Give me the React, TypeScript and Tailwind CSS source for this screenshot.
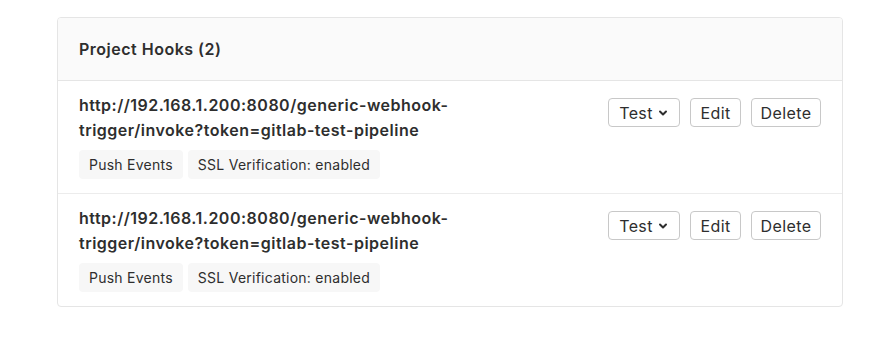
import { ChevronDown } from "lucide-react"

const hooks = [
  {
    id: 1,
    url: "http://192.168.1.200:8080/generic-webhook-trigger/invoke?token=gitlab-test-pipeline",
    events: ["Push Events", "SSL Verification: enabled"],
  },
  {
    id: 2,
    url: "http://192.168.1.200:8080/generic-webhook-trigger/invoke?token=gitlab-test-pipeline",
    events: ["Push Events", "SSL Verification: enabled"],
  },
]

export default function App() {
  return (
    <div className="min-h-screen bg-white pt-[17px] pl-[57px] pr-[45px] font-['Inter',sans-serif] text-[#2e2e2e]">
      <div className="w-[786px] rounded-[4px] border border-[#e5e5e5] overflow-hidden">
        {/* Header */}
        <div className="bg-[#fafafa] border-b border-[#e5e5e5] px-[21px] py-[19px]">
          <h3 className="text-[16px] leading-[24px] font-semibold tracking-[0.5px]">
            Project Hooks ({hooks.length})
          </h3>
        </div>

        {/* Hook rows */}
        <ul>
          {hooks.map((hook, i) => (
            <li
              key={hook.id}
              className={`flex items-start px-[21px] pt-[12px] pb-[14px] ${
                i < hooks.length - 1 ? "border-b border-[#ececec]" : ""
              }`}
            >
              <div className="flex-1 min-w-0 pr-[10px]">
                <div className="max-w-[420px] text-[16px] leading-[25px] font-semibold tracking-[0.5px]">
                  {hook.url}
                </div>
                <div className="flex gap-[5px] mt-[7px]">
                  {hook.events.map((ev) => (
                    <span
                      key={ev}
                      className="bg-[#f7f7f7] rounded-[4px] px-[10px] h-[29px] flex items-center text-[14px] tracking-[0.25px] text-[#2e2e2e]"
                    >
                      {ev}
                    </span>
                  ))}
                </div>
              </div>

              <div className="flex gap-[10px] mt-[5px] text-[16px] tracking-[0.4px]">
                <button className="h-[29px] w-[72px] flex items-center justify-center gap-[4px] rounded-[4px] border border-[#c8c8c8] bg-white">
                  Test
                  <ChevronDown className="h-[12px] w-[12px]" strokeWidth={4} />
                </button>
                <button className="h-[29px] w-[51px] flex items-center justify-center rounded-[4px] border border-[#c8c8c8] bg-white">
                  Edit
                </button>
                <button className="h-[29px] w-[70px] flex items-center justify-center rounded-[4px] border border-[#c8c8c8] bg-white">
                  Delete
                </button>
              </div>
            </li>
          ))}
        </ul>
      </div>
    </div>
  )
}
